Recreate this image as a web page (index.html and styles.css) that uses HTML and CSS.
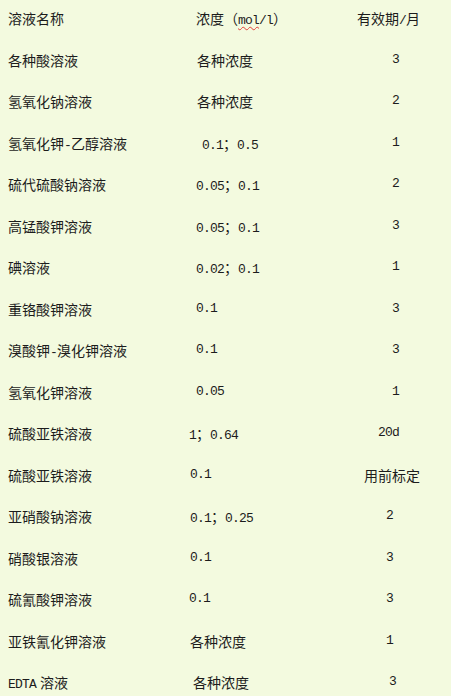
FILE: index.html
```html
<!DOCTYPE html>
<html lang="zh">
<head>
<meta charset="utf-8">
<title>溶液有效期</title>
<link rel="stylesheet" href="styles.css">
</head>
<body>
<div class="table">
  <div class="row"><span class="cell">溶液名称</span><span class="cell s7">浓度（<span class="spell">mol</span><span class="num">/l</span>）</span><span class="cell">有效期<span class="num">/</span>月</span></div>
  <div class="row"><span class="cell">各种酸溶液</span><span class="cell s8">各种浓度</span><span class="cell num t35">3</span></div>
  <div class="row"><span class="cell">氢氧化钠溶液</span><span class="cell s8">各种浓度</span><span class="cell num t35">2</span></div>
  <div class="row"><span class="cell">氢氧化钾<span class="num">-</span>乙醇溶液</span><span class="cell num s13">0.1<span class="semi">；</span>0.5</span><span class="cell num t35">1</span></div>
  <div class="row"><span class="cell">硫代硫酸钠溶液</span><span class="cell num s7">0.05<span class="semi">；</span>0.1</span><span class="cell num t35">2</span></div>
  <div class="row"><span class="cell">高锰酸钾溶液</span><span class="cell num s7">0.05<span class="semi">；</span>0.1</span><span class="cell num t35">3</span></div>
  <div class="row"><span class="cell">碘溶液</span><span class="cell num s7">0.02<span class="semi">；</span>0.1</span><span class="cell num t35">1</span></div>
  <div class="row"><span class="cell">重铬酸钾溶液</span><span class="cell num s7">0.1</span><span class="cell num t35">3</span></div>
  <div class="row"><span class="cell">溴酸钾<span class="num">-</span>溴化钾溶液</span><span class="cell num s7">0.1</span><span class="cell num t35">3</span></div>
  <div class="row"><span class="cell">氢氧化钾溶液</span><span class="cell num s7">0.05</span><span class="cell num t35">1</span></div>
  <div class="row"><span class="cell">硫酸亚铁溶液</span><span class="cell num s0">1<span class="semi">；</span>0.64</span><span class="cell num t21">20d</span></div>
  <div class="row"><span class="cell">硫酸亚铁溶液</span><span class="cell num s1">0.1</span><span class="cell t7">用前标定</span></div>
  <div class="row"><span class="cell">亚硝酸钠溶液</span><span class="cell num s1">0.1<span class="semi">；</span>0.25</span><span class="cell num t29">2</span></div>
  <div class="row"><span class="cell">硝酸银溶液</span><span class="cell num s1">0.1</span><span class="cell num t29">3</span></div>
  <div class="row"><span class="cell">硫氰酸钾溶液</span><span class="cell num s0">0.1</span><span class="cell num t29">3</span></div>
  <div class="row"><span class="cell">亚铁氰化钾溶液</span><span class="cell s1">各种浓度</span><span class="cell num t29">1</span></div>
  <div class="row"><span class="cell"><span class="num latin">EDTA</span>溶液</span><span class="cell s4">各种浓度</span><span class="cell num t32">3</span></div>
</div>
</body>
</html>
```
FILE: styles.css
```css
html, body {
  margin: 0;
  padding: 0;
  background: #f3fadf;
}
body {
  width: 451px;
  height: 696px;
  overflow: hidden;
  color: #1c1c1c;
  font-family: "Noto Sans CJK SC", "Noto Sans", sans-serif;
  font-size: 14px;
}
.table {
  display: flex;
  flex-direction: column;
  padding-left: 8px;
}
.row {
  display: grid;
  grid-template-columns: 181px 168px 1fr;
  height: 41.5px;
  align-items: start;
}
.cell {
  display: block;
  padding-top: 8px;
  line-height: 20px;
  white-space: nowrap;
}
.num {
  font-family: "Liberation Mono", "Noto Sans CJK SC", monospace;
  font-size: 13px;
  letter-spacing: -0.8px;
}
.num .num { letter-spacing: inherit; }
.semi {
  font-family: "Noto Sans CJK SC", sans-serif;
  font-size: 14px;
  letter-spacing: 0;
}
.latin {
  margin-right: 4px;
}
.spell {
  font-family: "Liberation Mono", monospace;
  font-size: 13px;
  letter-spacing: -0.8px;
  text-decoration: underline wavy #e0403a;
  text-decoration-thickness: 1px;
  text-underline-offset: 2px;
}
.s0 { margin-left: 0; }
.s1 { margin-left: 1px; }
.s4 { margin-left: 4px; }
.s7 { margin-left: 7px; }
.s8 { margin-left: 8px; }
.s13 { margin-left: 13px; }
.t7 { margin-left: 7px; }
.t21 { margin-left: 21px; }
.t29 { margin-left: 29px; }
.t32 { margin-left: 32px; }
.t35 { margin-left: 35px; }
```
